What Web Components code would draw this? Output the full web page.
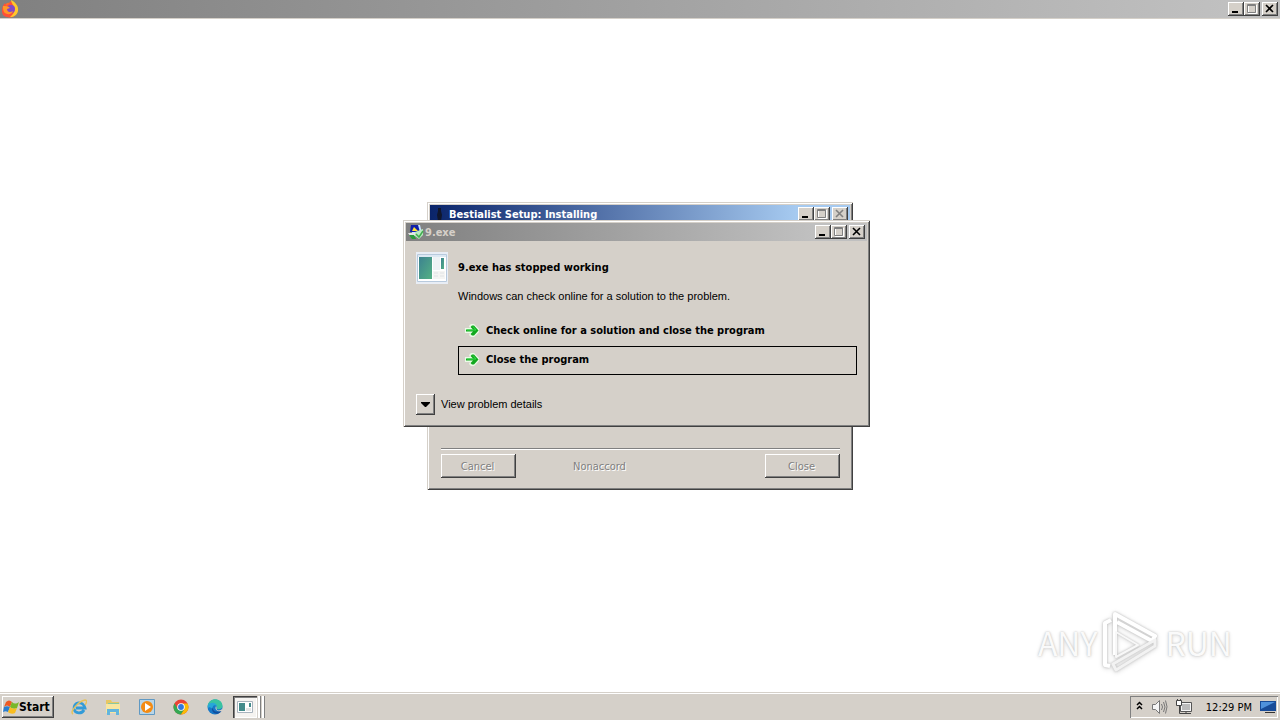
<!DOCTYPE html>
<html lang="en">
<head>
<meta charset="utf-8">
<title>Desktop</title>
<style>
    :root {
        --face: #d5d0c9;
        --light: #ffffff;
        --shadow: #808080;
        --dark: #404040;
    }

    body {
        margin: 0;
        height: 100vh;
        overflow: hidden;
        background: #fff;
        color: #000;
        font: 11px/14px "DejaVu Sans Condensed", "DejaVu Sans", sans-serif;
    }
</style>
</head>
<body>
<desk-top>
    <title-bar slot="top" class="page"><svg slot="icon" width="18" height="18" viewBox="1 0 18 18">
        <circle cx="9" cy="10" r="7.500" fill="#ff6b2b"/>
        <path d="M9 1c3 1 4 3 4 5 3 2 3 6 1 9-3 3-9 3-12 0C0 11 1 6 4 3l1 3c2-1 4-2 4-5Z" fill="#ff5038"/>
        <path d="M10 0c4 2 8 6 7 11-1 4-4 6-8 6 4-3 6-7 3-12-1-2-2-3-2-5Z" fill="#ffc72b"/>
        <circle cx="10" cy="9" r="4" fill="#8148c9"/>
        <path d="M2 6c3 0 5 0 7 2l-3 1c0 3 3 4 6 2-1 4-7 4-9 1-1-2-1-4-1-6Z" fill="#ff9827"/>
    </svg></title-bar>

    <setup-window></setup-window>
    <crash-dialog></crash-dialog>
    <water-mark></water-mark>

    <task-bar slot="bottom"></task-bar>
</desk-top>

<script>
class DeskTop extends HTMLElement {
    constructor() {
        super();
        this.attachShadow({ mode: 'open' });
        this.shadowRoot.innerHTML = `
            <style>
                :host {
                    display: flex;
                    flex-direction: column;
                    height: 100%;
                }
                main {
                    flex: 1;
                    border-top: 1px solid var(--face);
                }
            </style>
            <slot name="top"></slot>
            <main><slot></slot></main>
            <slot name="bottom"></slot>
        `;
    }
}

// Caption strip with the three window buttons
class TitleBar extends HTMLElement {
    constructor() {
        super();
        this.attachShadow({ mode: 'open' });
        this.shadowRoot.innerHTML = `
            <style>
                :host {
                    display: flex;
                    align-items: center;
                    gap: 1px;
                    height: 18px;
                    padding: 0 2px;
                    box-sizing: border-box;
                    background: linear-gradient(to right, #808080, #c0c0c0 calc(100% - 54px));
                    color: #d6d0c9;
                    font-weight: bold;
                }
                :host(.active) {
                    background: linear-gradient(to right, #0a246a, #a6caf0 calc(100% - 54px));
                    color: #fff;
                }
                .caption { flex: 1; padding-top: 1px; }
                .group { display: flex; margin-right: 1px; }
                button {
                    display: block;
                    width: 16px;
                    height: 14px;
                    padding: 0;
                    border: 0;
                    background: var(--face);
                    box-shadow: inset -1px -1px var(--dark), inset 1px 1px var(--light), inset -2px -2px var(--shadow);
                }
                svg { display: block; }
            </style>
            <slot name="icon"></slot>
            <span class="caption"></span>
            <span class="group">
                <button aria-label="Minimize"><svg width="16" height="14"><path d="M4 9h6v2H4z"/></svg></button>
                <button aria-label="Maximize" disabled><svg width="16" height="14" fill="none"><path d="M4.500 3v8.500h8V3" stroke="#fff"/><path d="M3.500 2.500h8v8h-8zM3 3.500h9" stroke="#808080"/></svg></button>
            </span>
            <button class="close" aria-label="Close"><svg width="16" height="14"><path d="M4 3l7 7M11 3l-7 7" stroke="#000" stroke-width="1.600"/></svg></button>
        `;
    }

    connectedCallback() {
        this.shadowRoot.querySelector('.caption').textContent = this.getAttribute('caption') || '';
        if (this.hasAttribute('no-close')) {
            const close = this.shadowRoot.querySelector('.close');
            close.disabled = true;
            close.querySelector('path').setAttribute('stroke', '#808080');
        }
    }
}

class ClassicButton extends HTMLElement {
    constructor() {
        super();
        this.attachShadow({ mode: 'open' });
        this.shadowRoot.innerHTML = `
            <style>
                :host { display: block; width: 75px; }
                button {
                    width: 100%;
                    height: 24px;
                    padding: 1px 2px 0 0;
                    border: 0;
                    font: inherit;
                    color: #808080;
                    text-shadow: 1px 1px #fff;
                    background: var(--face);
                    box-shadow: inset -1px -1px var(--dark), inset 1px 1px var(--light), inset -2px -2px var(--shadow);
                }
            </style>
            <button disabled><slot></slot></button>
        `;
    }
}

class SetupWindow extends HTMLElement {
    constructor() {
        super();
        this.attachShadow({ mode: 'open' });
        this.shadowRoot.innerHTML = `
            <style>
                :host {
                    position: absolute;
                    top: 202px;
                    left: calc(50% - 213px);
                    display: flex;
                    flex-direction: column;
                    width: 426px;
                    height: 288px;
                    padding: 3px;
                    box-sizing: border-box;
                    background: var(--face);
                    box-shadow: inset 1px 1px var(--face), inset -1px -1px var(--dark), inset 2px 2px var(--light), inset -2px -2px var(--shadow);
                }
                .page { flex: 1; }
                footer {
                    display: flex;
                    align-items: center;
                    margin: 0 10px 9px 11px;
                    padding-top: 5px;
                    border-top: 1px solid var(--shadow);
                    box-shadow: inset 0 1px var(--light);
                }
                .brand {
                    flex: 1;
                    padding: 2px 0 0 57px;
                    color: #808080;
                    text-shadow: 1px 1px #fff;
                }
            </style>
            <title-bar class="active" caption="Bestialist Setup: Installing" no-close>
                <svg slot="icon" width="16" height="16"><path d="M6 2h3v3l1 4-1 6H6L5 9l1-4z" fill="#10162c"/></svg>
            </title-bar>
            <div class="page"></div>
            <footer>
                <classic-button>Cancel</classic-button>
                <span class="brand">Nonaccord</span>
                <classic-button>Close</classic-button>
            </footer>
        `;
    }
}

// Row with a green arrow in front of its label
class CommandLink extends HTMLElement {
    constructor() {
        super();
        this.attachShadow({ mode: 'open' });
        this.shadowRoot.innerHTML = `
            <style>
                :host { display: block; }
                button {
                    display: flex;
                    align-items: center;
                    gap: 6px;
                    width: 100%;
                    height: 29px;
                    padding: 0 5px 2px;
                    border: 1px solid transparent;
                    background: none;
                    color: #000;
                    font: inherit;
                    font-weight: bold;
                }
                :host(.focused) button { border-color: #000; }
            </style>
            <button>
                <svg width="16" height="16" viewBox="0 0 16 16">
                    <path d="M1 5h5L5 3l2-2h3l5 5v3l-5 5H7l-2-2 1-2H1z" fill="#eafbe6"/>
                    <path d="M2 6.500h7L6.500 4l1.500-1.500h2l4.500 5-4.500 5H8L6.500 11 9 8.500H2z" fill="#12a81e"/>
                    <path d="M3 7h9L9 3.500" fill="none" stroke="#35dc4a"/>
                </svg>
                <span><slot></slot></span>
            </button>
        `;
    }
}

class CrashDialog extends HTMLElement {
    constructor() {
        super();
        this.attachShadow({ mode: 'open' });
        this.shadowRoot.innerHTML = `
            <style>
                :host {
                    position: absolute;
                    top: 220px;
                    left: calc(50% - 237px);
                    width: 467px;
                    padding: 3px;
                    box-sizing: border-box;
                    background: var(--face);
                    box-shadow: inset 1px 1px var(--face), inset -1px -1px var(--dark), inset 2px 2px var(--light), inset -2px -2px var(--shadow);
                }
                .body {
                    display: grid;
                    grid-template-columns: 32px 1fr;
                    column-gap: 10px;
                    padding: 11px 10px 0;
                }
                h1 {
                    margin: 0;
                    font-size: 11px;
                    line-height: 32px;
                }
                p, label { font-family: "Liberation Sans", "DejaVu Sans Condensed", sans-serif; }
                p { margin: 0 0 9px; line-height: 24px; }
                .text { grid-column: 2; }
                footer {
                    display: flex;
                    align-items: center;
                    gap: 6px;
                    padding: 19px 10px 9px;
                }
                footer button {
                    width: 19px;
                    height: 21px;
                    padding: 0;
                    border: 0;
                    background: var(--face);
                    box-shadow: inset -1px -1px var(--dark), inset 1px 1px var(--light), inset -2px -2px var(--shadow);
                }
                footer svg { display: block; }
                label { padding-bottom: 2px; }
            </style>
            <title-bar caption="9.exe">
                <svg slot="icon" width="16" height="16" viewBox="0 0 16 16">
                    <path d="M3 1h9l2 8H4z" fill="#c8e4ff"/>
                    <path d="M3 1h7l2 7H2z" fill="#1020a8"/>
                    <path d="M6 3l4 4H4z" fill="#ffe135"/>
                    <path d="M0 9h12l1 3H2z" fill="#e5e5e5"/>
                    <path d="M1 11h5l2 4H4z" fill="#289c3a"/>
                    <path d="M7 8l8-3v6l-4 4-4-3z" fill="#b9ecc0"/>
                    <path d="M8 10l3 3 4-6" fill="none" stroke="#42ad51" stroke-width="1.500"/>
                </svg>
            </title-bar>
            <div class="body">
                <svg width="32" height="32" viewBox="0 0 32 32">
                    <defs><linearGradient id="g" x2="1" y2="1"><stop stop-color="#3c8290"/><stop offset="1" stop-color="#55b184"/></linearGradient></defs>
                    <path d="M0 0h32v32H0z" fill="#e8edf5"/>
                    <path d="M1.500 2.500h29v27h-29z" fill="#fff" stroke="#b8cadd"/>
                    <path d="M2 3h28v2H2z" fill="#dce8f3"/>
                    <path d="M3 5h13v22H3z" fill="url(#g)"/>
                    <path d="M17 5h7v13h-7z" fill="#eef2f5"/>
                    <path d="M25 6h3v11h-3z" fill="url(#g)"/>
                    <path d="M17 19h12v8H17z" fill="#f5f5f3"/>
                    <path d="M18 21h4M18 24h4M24 21h4M24 24h4" stroke="#e0e3e5"/>
                </svg>
                <h1>9.exe has stopped working</h1>
                <div class="text">
                    <p>Windows can check online for a solution to the problem.</p>
                    <command-link>Check online for a solution and close the program</command-link>
                    <command-link class="focused">Close the program</command-link>
                </div>
            </div>
            <footer>
                <button id="details"><svg width="19" height="21"><path d="M5 8h9v1l-4 4h-1L5 9z"/></svg></button>
                <label for="details">View problem details</label>
            </footer>
        `;
    }
}

class WaterMark extends HTMLElement {
    constructor() {
        super();
        this.attachShadow({ mode: 'open' });
        this.shadowRoot.innerHTML = `
            <style>
                :host {
                    position: absolute;
                    right: 48px;
                    bottom: 46px;
                    display: flex;
                    align-items: center;
                    gap: 4px;
                    color: #fafafa;
                    font: 32px/64px "Noto Sans CJK JP", "Liberation Sans", sans-serif;
                    text-shadow: 0 0 2px #bbb, 0 1px 4px #ddd;
                }
                svg { display: block; filter: drop-shadow(0 0 1px #bbb) drop-shadow(0 1px 2px #ddd); }
            </style>
            <span>ANY</span>
            <svg width="60" height="64" viewBox="0 0 60 64" fill="none" stroke="#fff" stroke-width="4" stroke-linejoin="round">
                <path d="M14 45V4l40 22-3 5-35-19"/>
                <path d="M10 10l-6 3v42l5 1"/>
                <path d="M15 22v25l22-12z" stroke="#f8f8f8" stroke-width="2"/>
                <path d="M12 54l42-24v6L15 60z" stroke="#f2f2f2" stroke-width="3"/>
            </svg>
            <span>RUN</span>
        `;
    }
}

class TaskBar extends HTMLElement {
    constructor() {
        super();
        this.attachShadow({ mode: 'open' });
        this.shadowRoot.innerHTML = `
            <style>
                :host {
                    display: flex;
                    align-items: center;
                    height: 28px;
                    padding: 4px 2px 2px;
                    box-sizing: border-box;
                    background: var(--face);
                    box-shadow: inset 0 1px var(--face), inset 0 2px var(--light);
                }
                button { padding: 0; border: 0; background: none; font: inherit; color: #000; }
                svg { display: block; }
                .start {
                    display: flex;
                    align-items: center;
                    width: 52px;
                    height: 22px;
                    padding-left: 1px;
                    font-weight: bold;
                    font-size: 12px;
                    background: var(--face);
                    box-shadow: inset -1px -1px var(--dark), inset 1px 1px var(--light), inset -2px -2px var(--shadow);
                }
                nav { display: flex; flex: 1; align-items: center; gap: 18px; padding-left: 17px; }
                .tasks { display: flex; gap: 1px; margin-left: -8px; }
                .task {
                    width: 24px;
                    height: 22px;
                    padding: 3px 4px;
                    background: #f5f3f0;
                    box-shadow: inset 1px 1px var(--dark), inset 2px 2px var(--shadow), inset -1px -1px var(--light);
                }
                .edge { width: 3px; background: var(--light); border-right: 1px solid var(--shadow); box-sizing: border-box; }
                .tray {
                    display: flex;
                    align-items: center;
                    gap: 8px;
                    height: 22px;
                    padding: 0 2px 0 6px;
                    box-shadow: inset 1px 1px var(--shadow), inset -1px -1px var(--light);
                }
                time { padding: 1px 0 0 6px; }
            </style>
            <button class="start">
                <svg width="16" height="16" viewBox="0 0 16 16">
                    <path d="M3 3c2-2 4-2 6 0L7 8C5 6 3 6 1 8z" fill="#ee5a24"/>
                    <path d="M9 3c2 2 4 2 7 0l-2 6c-2 1-5 1-7-1z" fill="#79b829"/>
                    <path d="M1 8c2-1 4-1 6 0l-2 5c-2-1-3-1-5 0z" fill="#2b7ed0"/>
                    <path d="M7 8c2 2 4 2 7 1l-2 5c-2 1-5 1-7-1z" fill="#f9bd20"/>
                </svg>Start</button>
            <nav>
                <button aria-label="Internet Explorer"><svg width="16" height="16" viewBox="0 0 16 16" fill="none">
                    <path d="M13 11c-2 4-9 4-10-1-1-7 9-9 11-1H5" stroke="#329bd8" stroke-width="2.800"/>
                    <path d="M2 15C-2 13 8 2 14 1c3 0 1 4 0 5" stroke="#e6c25c" stroke-width="1.500"/>
                </svg></button>
                <button aria-label="Explorer"><svg width="16" height="16" viewBox="0 0 16 16">
                    <path d="M1 1h5l1 2h7v10H1z" fill="#e7c763"/>
                    <path d="M3 4h11v2H3z" fill="#8ac8a0"/>
                    <path d="M1 5h14v9H1z" fill="#f8e6a0"/>
                    <path d="M2 16v-6h12v6h-3v-3H5v3z" fill="#62b5dd"/>
                </svg></button>
                <button aria-label="Media Player"><svg width="16" height="16" viewBox="0 0 16 16">
                    <path d="M.5.5h15v15H.5z" fill="#b9d5e7" stroke="#6099c3"/>
                    <circle cx="8" cy="8" r="6" fill="#f48b13"/>
                    <path d="M6 4l6 4-6 4z" fill="#fff"/>
                </svg></button>
                <button aria-label="Chrome"><svg width="16" height="16" viewBox="0 0 16 16">
                    <circle cx="8" cy="8" r="7.500" fill="#ea4335"/>
                    <path d="M1.500 4.200A7.500 7.500 0 0 0 8 15.500L11.500 10H4.800z" fill="#34a853"/>
                    <path d="M14.600 4.500A7.500 7.500 0 0 1 8 15.500L11.500 10 9 4.500z" fill="#fbbc05"/>
                    <circle cx="8" cy="8" r="3.800" fill="#fff"/>
                    <circle cx="8" cy="8" r="2.900" fill="#3278dc"/>
                </svg></button>
                <button aria-label="Edge"><svg width="16" height="16" viewBox="0 0 16 16">
                    <circle cx="8" cy="8" r="7.500" fill="#1778c8"/>
                    <path d="M.5 8C1-2 15-2 15.500 7c0 4-6 4-6 2 2-3-4-6-9-1Z" fill="#39c3a1"/>
                    <path d="M1 6c3-4 9-2 9 1-3-2-5 0-4 3-3-2-4-2-5-1z" fill="#27a7d8"/>
                    <path d="M6 8c-1 5 5 6 9 3-2 5-10 5-10-1z" fill="#124f9e"/>
                    <path d="M9 7c1 1 0 2 1 4 2 1 4 0 5-1v2c-4 1-8-1-6-5z" fill="#d6d0c9"/>
                </svg></button>
                <div class="tasks">
                    <button class="task" aria-label="9.exe"><svg width="16" height="16" viewBox="0 0 16 16">
                        <path d="M.5 2.500h15v11H.5z" fill="#fff" stroke="#a8b3bd"/>
                        <path d="M2 4h6v8H2z" fill="#438b8b"/>
                        <path d="M12 4h2v4h-2z" fill="#438b8b"/>
                        <path d="M9 9h5v3H9z" fill="#e3e5e5"/>
                    </svg></button>
                    <span class="edge"></span>
                    <span class="edge"></span>
                </div>
            </nav>
            <div class="tray">
                <button aria-label="Show hidden icons"><svg width="8" height="16" fill="none" stroke="#000" stroke-width="1.500"><path d="M1 6l2.500-2.500L6 6M1 10l2.500-2.500L6 10"/></svg></button>
                <svg width="16" height="16" viewBox="0 0 16 16" fill="none" stroke="#777">
                    <path d="M.5 5.500h3l4-4v13l-4-4h-3z" fill="#f5f5f5"/>
                    <path d="M9.500 5q2 3 0 6M11.500 3q3 5 0 10M13.500 1.500q3 6 0 13"/>
                </svg>
                <svg width="16" height="16" viewBox="0 0 16 16" fill="none">
                    <path d="M4.500 3.500h11v9h-11z" fill="#f4f4f4" stroke="#555"/>
                    <path d="M6 5h8v6H6z" fill="#bbb"/>
                    <path d="M5 14.500h10M10 13v1" stroke="#444"/>
                    <path d="M.5 1.500h5v5h-5z" fill="#fff" stroke="#444"/>
                    <path d="M1.500 0v2M4.500 0v2M3.500 7v7.500H7" stroke="#444"/>
                </svg>
                <time>12:29 PM</time>
                <button aria-label="Show desktop"><svg width="16" height="16" viewBox="0 0 16 16">
                    <path d="M0 2h16v10H0z" fill="#174b98"/>
                    <path d="M1 3h14L1 10z" fill="#4e91dc"/>
                    <path d="M5 13h10v1H5z" fill="#333"/>
                </svg></button>
            </div>
        `;
    }
}

customElements.define('desk-top', DeskTop);
customElements.define('title-bar', TitleBar);
customElements.define('classic-button', ClassicButton);
customElements.define('setup-window', SetupWindow);
customElements.define('command-link', CommandLink);
customElements.define('crash-dialog', CrashDialog);
customElements.define('water-mark', WaterMark);
customElements.define('task-bar', TaskBar);
</script>
</body>
</html>
